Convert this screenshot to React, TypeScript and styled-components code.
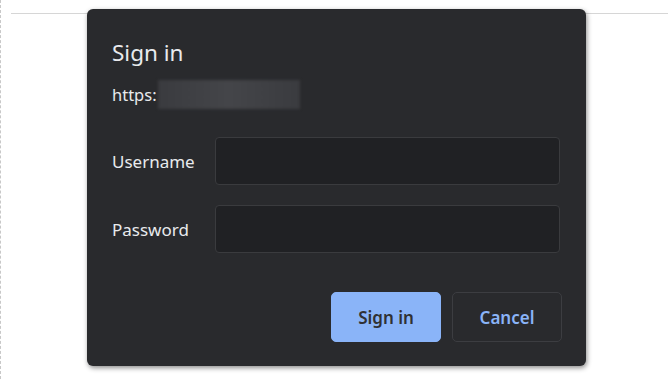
import React, { useState } from "react";
import styled, { createGlobalStyle } from "styled-components";

const GlobalStyle = createGlobalStyle`
  html, body {
    margin: 0;
    padding: 0;
    background: #ffffff;
  }
  * {
    box-sizing: border-box;
  }
`;

const Page = styled.div`
  width: 668px;
  height: 379px;
  overflow: hidden;
  border-left: 1px dashed #c8c8c8;
  background: linear-gradient(#d6d6d6, #d6d6d6) no-repeat 10px 13px / 100% 1px,
    #ffffff;
  padding: 9px 0 0 86px;
  font-family: "Noto Sans", "Open Sans", sans-serif;
`;

const Dialog = styled.form`
  width: 499px;
  height: 357px;
  background: #292a2d;
  border-radius: 6px;
  box-shadow: 1px 2px 5px rgba(0, 0, 0, 0.45);
  padding: 30px 24px 24px 25px;
  display: flex;
  flex-direction: column;
  color: #e8eaed;
`;

const Title = styled.h1`
  margin: 0;
  font-size: 22.5px;
  line-height: 28px;
  font-weight: 400;
  color: #e8eaed;
`;

const Origin = styled.div`
  margin-top: 13px;
  height: 29px;
  display: flex;
  align-items: center;
  font-size: 16.5px;
  color: #e8eaed;
`;

const Blurred = styled.span`
  width: 142px;
  height: 29px;
  margin-left: 1px;
  background: linear-gradient(90deg, #3a3b3f, #444549 50%, #3a3b3f);
  filter: blur(1.5px);
`;

const Fields = styled.div`
  margin-top: 28px;
  margin-right: 2px;
  display: grid;
  grid-template-columns: 103px 1fr;
  row-gap: 20px;
  align-items: center;
`;

const Label = styled.label`
  font-size: 17px;
  color: #e8eaed;
`;

const Input = styled.input`
  height: 48px;
  width: 100%;
  background: #202124;
  border: 1px solid #3a3b3e;
  border-radius: 4px;
  color: #e8eaed;
  font: inherit;
  font-size: 16px;
  padding: 0 12px;
  outline: none;
`;

const Actions = styled.div`
  margin-top: 39px;
  display: flex;
  justify-content: flex-end;
  gap: 11px;
`;

const Button = styled.button<{ $primary?: boolean }>`
  width: 110px;
  height: 50px;
  border-radius: 5px;
  font-family: inherit;
  font-size: 17px;
  font-weight: 600;
  cursor: pointer;
  background: ${(p) => (p.$primary ? "#8ab4f8" : "transparent")};
  color: ${(p) => (p.$primary ? "#303134" : "#8ab4f8")};
  border: 1px solid ${(p) => (p.$primary ? "#8ab4f8" : "#3c3d41")};
`;

const App = () => {
  const [username, setUsername] = useState("");
  const [password, setPassword] = useState("");

  return (
    <>
      <GlobalStyle />
      <Page>
        <Dialog onSubmit={(e) => e.preventDefault()}>
          <Title>Sign in</Title>
          <Origin>
            https:
            <Blurred />
          </Origin>
          <Fields>
            <Label htmlFor="username">Username</Label>
            <Input
              id="username"
              type="text"
              value={username}
              onChange={(e) => setUsername(e.target.value)}
            />
            <Label htmlFor="password">Password</Label>
            <Input
              id="password"
              type="password"
              value={password}
              onChange={(e) => setPassword(e.target.value)}
            />
          </Fields>
          <Actions>
            <Button $primary type="submit">
              Sign in
            </Button>
            <Button type="button">Cancel</Button>
          </Actions>
        </Dialog>
      </Page>
    </>
  );
};

export default App;
